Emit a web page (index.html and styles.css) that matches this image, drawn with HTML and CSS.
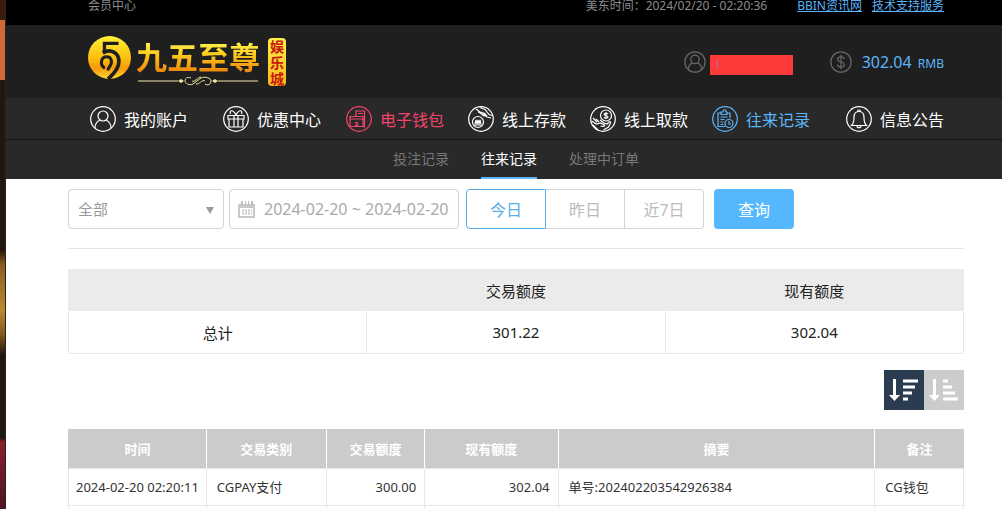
FILE: index.html
```html
<!DOCTYPE html>
<html lang="zh-CN">
<head>
  <meta charset="UTF-8">
  <meta name="viewport" content="width=device-width, initial-scale=1">
  <title>会员中心</title>
  <link rel="stylesheet" href="styles.css">
</head>
<body>

<div class="side-strip"></div>

<div class="page">
  <div class="topbar">
    <span class="topbar-title">会员中心</span>
    <span class="topbar-time">美东时间：2024/02/20 - 02:20:36</span>
    <a href="#">BBIN资讯网</a>
    <a href="#">技术支持服务</a>
  </div>

  <header class="header">
    <a href="#" class="logo">
      <svg class="logo-mark" viewBox="0 0 128 128">
        <defs>
          <linearGradient id="gold" x1="0" y1="0" x2="0" y2="1">
            <stop offset="0" stop-color="#fff23a"/>
            <stop offset="0.5" stop-color="#fcc00f"/>
            <stop offset="0.75" stop-color="#f79a0a"/>
            <stop offset="1" stop-color="#fdd835"/>
          </linearGradient>
        </defs>
        <circle cx="64" cy="64" r="64" fill="url(#gold)"/>
        <g fill="none" stroke="#1f1f1f">
          <path d="M91 22H49V46" stroke-width="10"/>
          <path d="M44 50C68 36 92 50 92 76C92 96 78 112 60 128" stroke-width="11"/>
          <path d="M50 96C34 86 38 62 56 62C70 62 74 78 65 90L58 102" stroke-width="9"/>
        </g>
      </svg>
      <span class="logo-name">
        <span class="logo-text">九五至尊</span>
        <svg class="logo-line" viewBox="0 0 124 10" fill="none" stroke="#efe6a6">
          <path d="M2 5H42M82 5H122" stroke-width="1"/>
          <path d="M42 5l3-2 3 2-3 2zM76 5l3-2 3 2-3 2z" fill="#efe6a6" stroke="none"/>
          <path d="M55 2c-4-2-6 1-6 3s4 5 8 3l8-6c4-2 10 0 10 3s-3 5-6 3M56 5c2 2 6-4 9-4M60 8c3 1 6-5 9-3"/>
        </svg>
      </span>
      <span class="logo-tag">娱乐城</span>
    </a>

    <div class="account">
      <svg class="account-icon" viewBox="0 0 26 26">
        <circle cx="13" cy="13" r="12"/>
        <circle cx="13" cy="10" r="5"/>
        <path d="M5 22c0-5 3-7 5-8M21 22c0-5-3-7-5-8"/>
      </svg>
      <span class="account-name">|</span>
      <svg class="account-icon" viewBox="0 0 26 26">
        <circle cx="13" cy="13" r="12"/>
        <path d="M17 9.500c-.5-2-2-2.500-4-2.500s-4 1-4 3c0 4 8 2 8 6 0 2-2 3-4 3s-4-1-4-3M13 4.500v17"/>
      </svg>
      <span class="balance">302.04 <small>RMB</small></span>
    </div>
  </header>

  <nav class="main-nav">
    <a href="#">
      <svg viewBox="0 0 26 26">
        <circle cx="13" cy="13" r="12.300"/>
        <circle cx="13" cy="10" r="5"/>
        <path d="M5 22c0-5 3-7 5-8M21 22c0-5-3-7-5-8"/>
      </svg>
      我的账户
    </a>
    <a href="#">
      <svg viewBox="0 0 26 26">
        <circle cx="13" cy="13" r="12.300"/>
        <path d="M5 9.500h16v3.500H5zM6 13v8h14v-8M11 9.500V21M15 9.500V21M13 9C10 3 6 4 7.500 8M13 9c3-6 7-5 5.500-1"/>
      </svg>
      优惠中心
    </a>
    <a href="#" class="hot">
      <svg viewBox="0 0 26 26">
        <circle cx="13" cy="13" r="12.300"/>
        <path d="M4 10.500h13v10H4zM4 13h13M10 10V5h8.500v16H17M12 7.500h5M12 17c-.3-1-2.500-1-2.500 0s2.500 1 2.500 2-2.500 1-2.500 0M17 13h2"/>
      </svg>
      电子钱包
    </a>
    <a href="#">
      <svg viewBox="0 0 26 26">
        <circle cx="13" cy="13" r="12.300"/>
        <circle cx="10" cy="16" r="5.500"/>
        <path d="M7 18l1-4 1 4 1-4 1 4 1-4 1 4M5.500 19h9M8 3l4 3 4 1M12 1.500l5 2 4 5 3 1M10 6c3 0 4 4 7 4M13 6c3 1 4 4 6 5l4 1M16 7l3 3"/>
      </svg>
      线上存款
    </a>
    <a href="#">
      <svg viewBox="0 0 26 26">
        <circle cx="13" cy="13" r="12.300"/>
        <circle cx="16" cy="9.500" r="5.500"/>
        <path d="M18 8c-.5-1-4-1-4 .5s4 1 4 2.500-3.500 1.500-4 .3M16 6v7M1.500 15l5 3 4-1 4 2c1 1-1 2-4 1M3 12l4 4M6 13l3 3M10 14l4 3 3 1 2-2c1-1 2 0 1.500 1l-2 4-5 3M3 19l5 5"/>
      </svg>
      线上取款
    </a>
    <a href="#" class="current">
      <svg viewBox="0 0 26 26">
        <circle cx="13" cy="13" r="12.300"/>
        <path d="M13 20.500H6V7h3M15 7h3v5M9 6h2c0-3 3-3 3 0h1v2.500H9zM8.500 11h7M8.500 13.500h4M8.500 16h3M8.500 18.500h3"/>
        <circle cx="17" cy="17.500" r="4"/>
        <path d="M17 15v3h2"/>
      </svg>
      往来记录
    </a>
    <a href="#">
      <svg viewBox="0 0 26 26">
        <circle cx="13" cy="13" r="12.300"/>
        <path d="M5.500 19.500c2-2 2.500-4 2.500-8 0-4 2-6 5-6s5 2 5 6c0 4 .5 6 2.500 8zM11.500 5.500c0-2 3-2 3 0M11 19.500c0 3 4 3 4 0"/>
      </svg>
      信息公告
    </a>
  </nav>

  <nav class="sub-nav">
    <a href="#">投注记录</a>
    <a href="#" class="current">往来记录</a>
    <a href="#">处理中订单</a>
  </nav>

  <main class="content">
    <form class="filters">
      <div class="select-box">
        <select aria-label="交易类别">
          <option>全部</option>
        </select>
      </div>
      <label class="date-box">
        <svg viewBox="0 0 17 17">
          <path d="M0 3h17v14H0z" fill="#c8c8c8"/>
          <path d="M2 7h13v8H2z" fill="#fff"/>
          <path d="M3 0h2v4H3zM7 0h1v4H7zM10 0h1v4h-1zM13 0h2v4h-2z" fill="#bbb"/>
          <path d="M4 9.500h10M4 12.500h10" stroke="#c8c8c8" stroke-width="2" stroke-dasharray="2 1"/>
        </svg>
        <input type="text" value="2024-02-20 ~ 2024-02-20" aria-label="日期" readonly>
      </label>
      <div class="day-group">
        <button type="button" class="active">今日</button>
        <button type="button">昨日</button>
        <button type="button">近7日</button>
      </div>
      <button type="submit" class="search-btn">查询</button>
    </form>

    <table class="summary">
      <thead>
        <tr>
          <th></th>
          <th>交易额度</th>
          <th>现有额度</th>
        </tr>
      </thead>
      <tbody>
        <tr>
          <td>总计</td>
          <td>301.22</td>
          <td>302.04</td>
        </tr>
      </tbody>
    </table>

    <div class="sort">
      <button type="button" class="active" aria-label="降序">
        <svg viewBox="0 0 40 40">
          <path d="M9 9h3v16h4l-5.500 6L5 25h4z"/>
          <path d="M19 11h15M19 17h12M19 23h9M19 29h5"/>
        </svg>
      </button>
      <button type="button" aria-label="升序">
        <svg viewBox="0 0 40 40">
          <path d="M9 9h3v16h4l-5.500 6L5 25h4z"/>
          <path d="M19 11h5M19 17h9M19 23h12M19 29h15"/>
        </svg>
      </button>
    </div>

    <table class="records">
      <colgroup>
        <col class="col-time">
        <col class="col-type">
        <col class="col-amount">
        <col class="col-balance">
        <col class="col-summary">
        <col class="col-note">
      </colgroup>
      <thead>
        <tr>
          <th>时间</th>
          <th>交易类别</th>
          <th>交易额度</th>
          <th>现有额度</th>
          <th>摘要</th>
          <th>备注</th>
        </tr>
      </thead>
      <tbody>
        <tr>
          <td class="time">2024-02-20 02:20:11</td>
          <td>CGPAY支付</td>
          <td class="num">300.00</td>
          <td class="num">302.04</td>
          <td>单号:202402203542926384</td>
          <td>CG钱包</td>
        </tr>
      </tbody>
      <tfoot>
        <tr><td></td><td></td><td></td><td></td><td></td><td></td></tr>
      </tfoot>
    </table>
  </main>
</div>

</body>
</html>
```
FILE: styles.css
```css
* {
  box-sizing: border-box;
}
body {
  margin: 0;
  display: flex;
  min-height: 100vh;
  font-family: "Noto Sans", "Noto Sans CJK SC", sans-serif;
  font-size: 14px;
  color: #222;
  background: #fff;
}
a {
  color: inherit;
  text-decoration: none;
}
button, input, select {
  font-family: inherit;
  font-size: 16px;
}

/* strip of the background art left of the page */
.side-strip {
  width: 6px;
  flex: none;
  border-right: 1px solid #2c211b;
  background: linear-gradient(#3a1d0c 0 20px, #d0683a 20px 80px, #24160e 80px 250px, #8a5d22 265px, #b98a30 310px, #80551c 335px, #1e1713 355px 438px, #8c1f30 442px, #4a1520);
}
.page {
  flex: 1;
  min-width: 0;
}

.topbar {
  display: flex;
  gap: 10px;
  height: 25px;
  padding: 0 58px 0 82px;
  background: #000;
  color: #8c8c8c;
  font-size: 12px;
  line-height: 12px;
}
.topbar-title {
  flex: 1;
}
.topbar-time {
  margin-right: 20px;
}
.topbar a {
  color: #5cb5fa;
  text-decoration: underline;
}

.header {
  display: flex;
  align-items: center;
  justify-content: space-between;
  height: 73px;
  padding: 0 58px 0 82px;
  background: #1f1f1f;
}
.logo {
  display: flex;
  align-items: center;
}
.logo-mark {
  width: 43px;
  height: 43px;
  margin: 0 5px 8px 0;
}
.logo-name {
  display: flex;
  flex-direction: column;
}
.logo-text {
  font-family: "Noto Sans CJK SC", sans-serif;
  font-size: 31px;
  line-height: 36px;
  font-weight: bold;
  color: transparent;
  background: linear-gradient(#fff04a 15%, #fcc419 50%, #f08c0c 90%);
  -webkit-background-clip: text;
  background-clip: text;
}
.logo-line {
  width: 124px;
  height: 10px;
  margin-top: 2px;
}
.logo-tag {
  width: 18px;
  margin-left: 8px;
  border-radius: 4px;
  background: linear-gradient(#fff04a, #fbb61a);
  color: #c8180c;
  font-family: "Noto Sans CJK SC", sans-serif;
  font-size: 14px;
  line-height: 16px;
  font-weight: bold;
  text-align: center;
}
.account {
  display: flex;
  align-items: center;
}
.account-icon {
  width: 22px;
  height: 22px;
  fill: none;
  stroke: #666;
  stroke-width: 1.5;
}
.account-name {
  width: 83px;
  height: 20px;
  margin: 6px 37px 0 4px;
  padding-left: 6px;
  background: #fd3a3a;
  color: #8a8ad8;
  font-size: 8px;
  line-height: 18px;
}
.balance {
  margin-left: 10px;
  color: #5cb5fa;
  font-size: 16px;
}
.balance small {
  margin-left: 2px;
  font-size: 12px;
}

.main-nav {
  display: grid;
  grid-template-columns: 133fr 123fr 122fr 122fr 122fr 134fr 98fr;
  height: 42px;
  padding: 0 58px 0 84px;
  border-bottom: 1px solid #111;
  background: #292929;
  color: #fff;
  font-size: 16px;
}
.main-nav a {
  display: flex;
  align-items: center;
  gap: 8px;
  white-space: nowrap;
}
.main-nav svg {
  width: 26px;
  height: 26px;
  flex: none;
  fill: none;
  stroke: currentColor;
  stroke-width: 1.2;
}
.main-nav .hot {
  color: #f0446c;
}
.main-nav .current {
  color: #5cb5fa;
}

.sub-nav {
  display: flex;
  justify-content: center;
  gap: 32px;
  padding: 1px 15px 0 39px;
  background: #292929;
  color: #777;
  line-height: 36px;
}
.sub-nav a {
  border-bottom: 2px solid transparent;
}
.sub-nav .current {
  color: #fff;
  border-color: #5cb5fa;
}

.content {
  padding: 10px 38px 0 62px;
}
.filters {
  display: flex;
  padding-bottom: 19px;
  border-bottom: 1px solid #e4e4e4;
}
.select-box,
.date-box {
  height: 40px;
  border: 1px solid #d4d4d4;
  border-radius: 4px;
}
.select-box {
  position: relative;
  width: 156px;
  margin-right: 5px;
}
.select-box::after {
  content: "";
  position: absolute;
  top: 17px;
  right: 9px;
  border: 4px solid transparent;
  border-top: 7px solid #999;
  border-bottom: 0;
  pointer-events: none;
}
.select-box select {
  width: 100%;
  height: 100%;
  padding: 0 9px;
  border: 0;
  background: none;
  color: #999;
  font-size: 15px;
  appearance: none;
}
.date-box {
  display: flex;
  align-items: center;
  width: 230px;
  margin-right: 7px;
  padding-left: 8px;
}
.date-box svg {
  width: 17px;
  height: 17px;
  flex: none;
  margin-right: 9px;
}
.date-box input {
  flex: 1;
  min-width: 0;
  padding: 0;
  border: 0;
  background: none;
  color: #aaa;
  outline: none;
}
.day-group {
  display: flex;
  margin-right: 10px;
}
.day-group button {
  width: 79px;
  height: 40px;
  padding: 0;
  border: 1px solid #d4d4d4;
  border-left: 0;
  background: #fff;
  color: #bbb;
}
.day-group button:last-child {
  border-radius: 0 4px 4px 0;
}
.day-group .active {
  width: 80px;
  border: 1px solid #58aeea;
  border-radius: 4px 0 0 4px;
  color: #58aeea;
}
.search-btn {
  width: 80px;
  height: 40px;
  padding: 0;
  border: 0;
  border-radius: 4px;
  background: #55b8ff;
  color: #fff;
}

table {
  width: 100%;
  border-collapse: collapse;
  table-layout: fixed;
}
.summary {
  margin-top: 20px;
  font-size: 15px;
  text-align: center;
}
.summary th {
  height: 41px;
  padding: 0;
  border: 1px solid #ebebeb;
  background: #ebebeb;
  font-weight: normal;
}
.summary td {
  height: 43px;
  padding: 0;
  border: 1px solid #e8e8e8;
}

.sort {
  display: flex;
  justify-content: flex-end;
  margin: 16px 0 19px;
}
.sort button {
  width: 40px;
  height: 40px;
  padding: 0;
  border: 0;
  background: #ccc;
}
.sort .active {
  background: #2c3c50;
}
.sort svg {
  display: block;
  fill: #fff;
  stroke: #fff;
  stroke-width: 0;
}
.sort path + path {
  stroke-width: 3;
}

.records {
  color: #333;
  font-size: 13px;
}
.col-time { width: 15.4%; }
.col-type { width: 13.4%; }
.col-amount { width: 11%; }
.col-balance { width: 14.9%; }
.col-summary { width: 35.4%; }
.records th {
  height: 39px;
  padding: 0;
  border-left: 1px solid #fff;
  background: #cbcbcb;
  color: #fff;
}
.records th:first-child {
  border-left-color: #cbcbcb;
}
.records td {
  height: 37px;
  padding: 0 8px 0 10px;
  border: 1px solid #e8e8e8;
  white-space: nowrap;
}
.records .time {
  padding: 0;
  text-align: center;
}
.records .num {
  text-align: right;
}
.records tfoot td {
  height: 4px;
  border-bottom: 0;
}
```
